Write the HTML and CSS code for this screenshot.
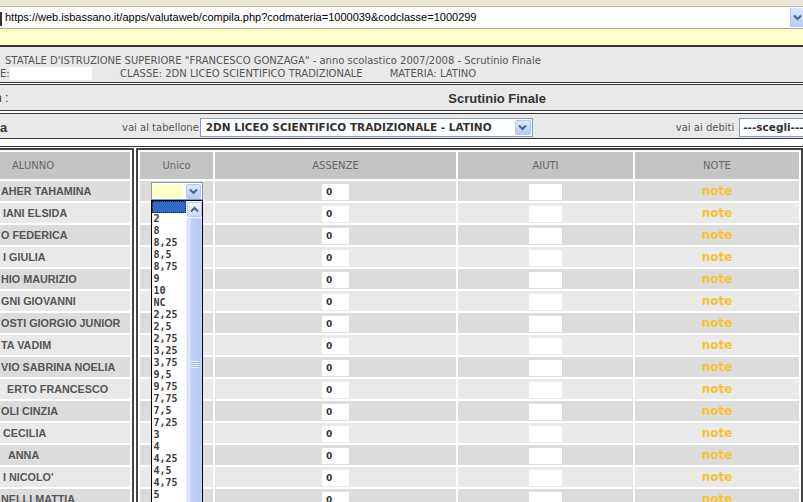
FILE: index.html
```html
<!DOCTYPE html>
<html>
<head>
<meta charset="utf-8">
<title>Scrutinio Finale</title>
<link rel="stylesheet" href="styles.css">
</head>
<body>
<div class="chrome"></div>
<div class="addr">
  <span class="addr-edge"></span>
  <div class="addr-text">https://web.isbassano.it/apps/valutaweb/compila.php?codmateria=1000039&amp;codclasse=1000299</div>
  <div class="addr-btn"><svg width="9" height="7" viewBox="0 0 9 7"><path d="M1 1.5 L4.5 5 L8 1.5" fill="none" stroke="#4d6185" stroke-width="2"/></svg></div>
</div>
<div class="infobar"></div>

<div class="panel head">
  <div class="line1">STATALE D'ISTRUZIONE SUPERIORE "FRANCESCO GONZAGA" - anno scolastico 2007/2008 - Scrutinio Finale</div>
  <div class="line2"><span class="cut">E:</span><span class="blank"></span><span class="classe">CLASSE: 2DN LICEO SCIENTIFICO TRADIZIONALE</span><span class="materia">MATERIA: LATINO</span></div>
</div>

<div class="panel title">
  <span class="cutlabel">n :</span><span class="ttl">Scrutinio Finale</span>
</div>

<div class="panel nav">
  <span class="navlabel">a</span>
  <span class="lbl tab-lbl">vai al tabellone</span>
  <div class="sel sel-tab"><span class="sel-text">2DN LICEO SCIENTIFICO TRADIZIONALE - LATINO</span><span class="sel-btn"><svg width="9" height="7" viewBox="0 0 9 7"><path d="M1 1.5 L4.5 5 L8 1.5" fill="none" stroke="#4d6185" stroke-width="2"/></svg></span></div>
  <span class="lbl deb-lbl">vai ai debiti</span>
  <div class="sel sel-deb"><span class="sel-text">---scegli---</span></div>
</div>

<div class="grid-wrap">
  <table class="names">
    <thead><tr><th>ALUNNO</th></tr></thead>
    <tbody>
      <tr class="odd"><td>AHER TAHAMINA</td></tr>
      <tr class="even"><td class="i2">IANI ELSIDA</td></tr>
      <tr class="odd"><td>O FEDERICA</td></tr>
      <tr class="even"><td class="i2">I GIULIA</td></tr>
      <tr class="odd"><td>HIO MAURIZIO</td></tr>
      <tr class="even"><td>GNI GIOVANNI</td></tr>
      <tr class="odd"><td>OSTI GIORGIO JUNIOR</td></tr>
      <tr class="even"><td>TA VADIM</td></tr>
      <tr class="odd"><td>VIO SABRINA NOELIA</td></tr>
      <tr class="even"><td class="i6">ERTO FRANCESCO</td></tr>
      <tr class="odd"><td>OLI CINZIA</td></tr>
      <tr class="even"><td class="i2">CECILIA</td></tr>
      <tr class="odd"><td class="i7">ANNA</td></tr>
      <tr class="even"><td class="i2">I NICOLO'</td></tr>
      <tr class="odd"><td>NELLI MATTIA</td></tr>
    </tbody>
  </table>

  <table class="marks">
    <colgroup><col class="c-unico"><col class="c-ass"><col class="c-aiu"><col class="c-note"></colgroup>
    <thead><tr><th>Unico</th><th>ASSENZE</th><th>AIUTI</th><th>NOTE</th></tr></thead>
    <tbody>
      <tr class="odd">
        <td>
          <div class="usel">
            <span class="yel"></span>
            <span class="ubtn"><svg width="9" height="7" viewBox="0 0 9 7"><path d="M1 1.5 L4.5 5 L8 1.5" fill="none" stroke="#4d6185" stroke-width="2"/></svg></span>
            <div class="list">
              <div class="items">
                <div class="hl"></div>
                <div>2</div><div>8</div><div>8,25</div><div>8,5</div><div>8,75</div><div>9</div><div>10</div><div>NC</div>
                <div>2,25</div><div>2,5</div><div>2,75</div><div>3,25</div><div>3,75</div><div>9,5</div><div>9,75</div>
                <div>7,75</div><div>7,5</div><div>7,25</div><div>3</div><div>4</div><div>4,25</div><div>4,5</div><div>4,75</div><div>5</div>
              </div>
              <div class="sbar">
                <div class="sb-up"><svg width="9" height="7" viewBox="0 0 9 7"><path d="M1 5.5 L4.5 2 L8 5.5" fill="none" stroke="#4d6185" stroke-width="2"/></svg></div>
                <div class="sb-thumb"><div class="grip"></div></div>
              </div>
            </div>
          </div>
        </td>
        <td><span class="inp">0</span></td><td><span class="inp wide"></span></td><td class="note">note</td>
      </tr>
      <tr class="even"><td></td><td><span class="inp">0</span></td><td><span class="inp wide"></span></td><td class="note">note</td></tr>
      <tr class="odd"><td></td><td><span class="inp">0</span></td><td><span class="inp wide"></span></td><td class="note">note</td></tr>
      <tr class="even"><td></td><td><span class="inp">0</span></td><td><span class="inp wide"></span></td><td class="note">note</td></tr>
      <tr class="odd"><td></td><td><span class="inp">0</span></td><td><span class="inp wide"></span></td><td class="note">note</td></tr>
      <tr class="even"><td></td><td><span class="inp">0</span></td><td><span class="inp wide"></span></td><td class="note">note</td></tr>
      <tr class="odd"><td></td><td><span class="inp">0</span></td><td><span class="inp wide"></span></td><td class="note">note</td></tr>
      <tr class="even"><td></td><td><span class="inp">0</span></td><td><span class="inp wide"></span></td><td class="note">note</td></tr>
      <tr class="odd"><td></td><td><span class="inp">0</span></td><td><span class="inp wide"></span></td><td class="note">note</td></tr>
      <tr class="even"><td></td><td><span class="inp">0</span></td><td><span class="inp wide"></span></td><td class="note">note</td></tr>
      <tr class="odd"><td></td><td><span class="inp">0</span></td><td><span class="inp wide"></span></td><td class="note">note</td></tr>
      <tr class="even"><td></td><td><span class="inp">0</span></td><td><span class="inp wide"></span></td><td class="note">note</td></tr>
      <tr class="odd"><td></td><td><span class="inp">0</span></td><td><span class="inp wide"></span></td><td class="note">note</td></tr>
      <tr class="even"><td></td><td><span class="inp">0</span></td><td><span class="inp wide"></span></td><td class="note">note</td></tr>
      <tr class="odd"><td></td><td><span class="inp">0</span></td><td><span class="inp wide"></span></td><td class="note">note</td></tr>
    </tbody>
  </table>
</div>
</body>
</html>
```

FILE: styles.css
```css
html, body {
  margin: 0;
  padding: 0;
}
body {
  width: 803px;
  height: 502px;
  overflow: hidden;
  background: #ffffff;
  font-family: "DejaVu Sans", Verdana, sans-serif;
  color: #555;
}

/* browser chrome */
.chrome {
  height: 6px;
  background: #ece9d8;
  border-bottom: 1px solid #b8b5a6;
}
.addr {
  display: flex;
  height: 21px;
  background: #ffffff;
  border-bottom: 1px solid #a9a9a9;
}
.addr-edge {
  width: 2px;
  margin: 5px 0 2px 0;
  background: #333;
  flex-shrink: 0;
}
.addr-text {
  flex: 1;
  padding-left: 3px;
  line-height: 21px;
  font-family: "Liberation Sans", Arial, sans-serif;
  font-size: 11px;
  color: #000;
  white-space: nowrap;
}
.addr-btn {
  width: 12px;
  margin: 1px 0;
  background: linear-gradient(#dbe6fe, #b5c9f6);
  border-left: 1px solid #b3c6f2;
  display: flex;
  align-items: center;
  justify-content: center;
}
.infobar {
  height: 16px;
  background: #ffffc6;
  border-bottom: 1px solid #333;
}

/* panels */
.panel {
  background: #e9e9e9;
  border-top: 1px solid #333;
  border-bottom: 1px solid #333;
  white-space: nowrap;
  overflow: hidden;
}
.panel > * {
  flex-shrink: 0;
}
.head {
  box-sizing: border-box;
  height: 37px;
  padding: 9px 0 0 5px;
  font-size: 10px;
  color: #555;
}
.line1 {
  height: 10px;
  line-height: 10px;
}
.line2 {
  display: flex;
  align-items: center;
  height: 13px;
  margin-top: 1px;
  margin-left: -5px;
}
.line2 > * {
  flex-shrink: 0;
}
.cut {
  width: 10px;
}
.blank {
  width: 82px;
  height: 13px;
  background: #fff;
}
.classe {
  margin-left: 28px;
}
.materia {
  margin-left: 27px;
}

.title {
  margin-top: 1px;
  height: 24px;
  display: flex;
  align-items: center;
  padding-top: 1px;
  box-sizing: content-box;
}
.cutlabel {
  font-family: "Liberation Sans", Arial, sans-serif;
  font-size: 12px;
  color: #333;
  margin-left: -5px;
}
.ttl {
  margin-left: 440px;
  font-family: "Liberation Sans", Arial, sans-serif;
  font-weight: bold;
  font-size: 13px;
  color: #333;
}

.nav {
  margin-top: 2px;
  height: 26px;
  display: flex;
  align-items: center;
  padding-top: 2px;
  box-sizing: border-box;
}
.navlabel {
  width: 122px;
  font-family: "Liberation Sans", Arial, sans-serif;
  font-weight: bold;
  font-size: 13px;
  color: #333;
}
.lbl {
  font-size: 10px;
  color: #555;
}
.sel {
  height: 19px;
  box-sizing: border-box;
  border: 1px solid #7f9db9;
  background: #fff;
  display: flex;
  align-items: center;
  font-weight: bold;
  font-size: 10.5px;
  color: #333;
}
.sel-tab {
  width: 333px;
  margin-left: 1px;
  padding-left: 5px;
}
.sel-tab .sel-text {
  flex: 1;
}
.sel-btn {
  width: 16px;
  height: 15px;
  margin-right: 1px;
  box-sizing: border-box;
  background: linear-gradient(#dce7fe, #b7cbf8);
  border: 1px solid #b3c6f2;
  border-radius: 2px;
  display: flex;
  align-items: center;
  justify-content: center;
}
.deb-lbl {
  margin-left: 143px;
}
.sel-deb {
  margin-left: 5px;
  width: 80px;
  padding-left: 3px;
}

/* grid */
.grid-wrap {
  margin-top: 7px;
  border-top: 1px solid #333;
  padding-top: 1px;
  display: flex;
  align-items: flex-start;
  gap: 2px;
}
table {
  border-collapse: separate;
  border-spacing: 2px;
  table-layout: fixed;
  flex-shrink: 0;
}
th {
  height: 27px;
  padding: 0;
  background: #c4c4c4;
  font-weight: normal;
  font-size: 10px;
  color: #666;
}
td {
  height: 20px;
  padding: 0;
}
tr.odd td {
  background: #dcdcdc;
}
tr.even td {
  background: #e9e9e9;
}

.names {
  width: 136px;
  margin-left: -2px;
  border-top: 2px solid #444;
  border-right: 2px solid #444;
}
.names th {
  text-align: left;
  padding-left: 12px;
}
.names td {
  font-family: "Liberation Sans", Arial, sans-serif;
  font-weight: bold;
  font-size: 10.8px;
  color: #555;
  white-space: nowrap;
  overflow: hidden;
  padding-left: 1px;
}
.names td.i2 { padding-left: 3px; }
.names td.i6 { padding-left: 7px; }
.names td.i7 { padding-left: 8px; }

.marks {
  width: 667px;
  border: 2px solid #444;
  border-bottom: none;
}
.c-unico { width: 73px; }
.c-ass { width: 241px; }
.c-aiu { width: 175px; }
.c-note { width: 164px; }
.marks th, .marks td {
  text-align: center;
}
.inp {
  display: inline-block;
  vertical-align: middle;
  width: 27px;
  height: 16px;
  box-sizing: border-box;
  padding-left: 4px;
  background: #fff;
  text-align: left;
  font-weight: bold;
  font-size: 9px;
  line-height: 16px;
  color: #333;
}
.inp.wide {
  width: 33px;
}
.note {
  font-weight: bold;
  font-size: 12px;
  color: #f3c430;
}

/* opened select */
.usel {
  position: relative;
  width: 52px;
  height: 18px;
  margin: 0 auto;
  box-sizing: border-box;
  border: 1px solid #7f9db9;
  background: #fff;
  display: flex;
  align-items: center;
  gap: 3px;
  padding: 0 1px 0 0;
}
.yel {
  width: 32px;
  height: 14px;
  background: #ffffc8;
}
.ubtn {
  width: 15px;
  height: 15px;
  box-sizing: border-box;
  background: linear-gradient(#dce7fe, #b7cbf8);
  border: 1px solid #b3c6f2;
  border-radius: 2px;
  display: flex;
  align-items: center;
  justify-content: center;
}
.list {
  position: absolute;
  left: -1px;
  top: 17px;
  width: 52px;
  height: 320px;
  box-sizing: border-box;
  border: 1px solid #000;
  background: #fff;
  display: flex;
  z-index: 5;
}
.items {
  width: 34px;
  text-align: left;
  font-family: "DejaVu Sans Mono", "Liberation Mono", monospace;
  font-weight: bold;
  font-size: 10px;
  line-height: 12px;
  color: #3c3c3c;
}
.items div {
  height: 12px;
  padding-left: 2px;
}
.items .hl {
  box-sizing: border-box;
  background: #3169c6;
  border: 1px dotted #0a1a50;
}
.sbar {
  width: 16px;
  display: flex;
  flex-direction: column;
  background: #f4f6fd;
}
.sb-up {
  height: 15px;
  margin: 1px 0 1px 1px;
  box-sizing: border-box;
  background: linear-gradient(#eef3fe, #cdd9fb);
  border: 1px solid #b8c9f3;
  border-radius: 2px;
  display: flex;
  align-items: center;
  justify-content: center;
}
.sb-thumb {
  flex: 1;
  margin-left: 1px;
  box-sizing: border-box;
  background: linear-gradient(90deg, #dfe6fd 0, #dfe6fd 2px, #c4cffa 3px, #bac7f8 12px, #d2dbfb 15px);
  border: 1px solid #c8d4fa;
  border-radius: 2px;
  position: relative;
}
.grip {
  position: absolute;
  left: 3px;
  top: 142px;
  width: 8px;
  height: 7px;
  background: repeating-linear-gradient(#eef2fe 0, #eef2fe 1px, #9fb2ec 1px, #9fb2ec 2px);
}
```
